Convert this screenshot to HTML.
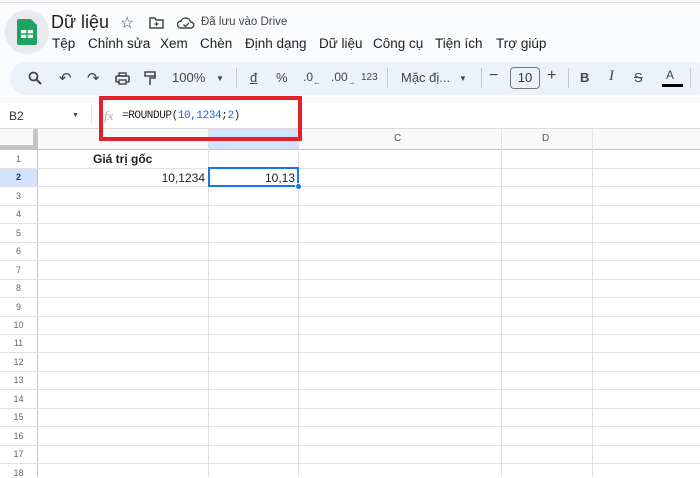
<!DOCTYPE html>
<html><head><meta charset="utf-8"><style>
*{margin:0;padding:0;box-sizing:border-box}
body{width:700px;height:477px;overflow:hidden;background:#fff;font-family:"Liberation Sans",Arial,sans-serif;position:relative;color:#1f1f1f}
.a{position:absolute}
.top{left:0;top:0;width:700px;height:130px;background:#f9fbfd}
.menu{top:36px;font-size:13.5px;color:#1f1f1f}
.tb{left:10px;top:62px;width:700px;height:33px;background:#edf2fa;border-radius:17px}
.ti{top:70px;font-size:13px;color:#444}
.hl{background:#e1e1e1}
.rl{left:0;width:37px;text-align:center;font-size:9px;color:#666}
</style></head><body>
<div class="a top"></div>
<div class="a" style="left:0;top:2px;width:700px;height:1px;background:#e0e0e0"></div>
<div class="a" style="left:5px;top:10px;width:44px;height:44px;border-radius:22px;background:#e8eaed"></div>
<svg class="a" style="left:17px;top:19px" width="20" height="26" viewBox="0 0 20 26"><path d="M0 2a2 2 0 0 1 2-2h12l6 6v18a2 2 0 0 1-2 2H2a2 2 0 0 1-2-2z" fill="#1ea362"/><rect x="4" y="11" width="12" height="8" fill="#fff"/><path d="M4 15h12M10 11v8" stroke="#1ea362" stroke-width="1.5"/></svg>
<div class="a" style="left:51px;top:12px;font-size:18px">Dữ liệu</div>
<div class="a" style="left:120px;top:13px;font-size:16px;color:#444">☆</div>
<svg class="a" style="left:149px;top:17px" width="15" height="12" viewBox="0 0 15 12"><path d="M1 1h5l1 2h7v8H1z" fill="none" stroke="#444" stroke-width="1.5"/><path d="M7.5 5v4M5.5 7h4" stroke="#444" stroke-width="1.3"/></svg>
<svg class="a" style="left:177px;top:17px" width="18" height="12" viewBox="0 0 18 12"><path d="M4 11a3.5 3.5 0 0 1 0-7 5 5 0 0 1 9.5 1A3 3 0 0 1 14 11z" fill="none" stroke="#444" stroke-width="1.4"/><path d="M6.5 7.5l2 2 3.5-3.5" stroke="#444" stroke-width="1.3" fill="none"/></svg>
<div class="a" style="left:201px;top:16px;font-size:11.5px;color:#444">Đã lưu vào Drive</div>
<div class="a menu" style="left:52px">Tệp</div>
<div class="a menu" style="left:88px">Chỉnh sửa</div>
<div class="a menu" style="left:160px">Xem</div>
<div class="a menu" style="left:200px">Chèn</div>
<div class="a menu" style="left:245px">Định dạng</div>
<div class="a menu" style="left:319px">Dữ liệu</div>
<div class="a menu" style="left:373px">Công cụ</div>
<div class="a menu" style="left:435px">Tiện ích</div>
<div class="a menu" style="left:496px">Trợ giúp</div>
<div class="a tb"></div>
<svg class="a" style="left:28px;top:71px" width="14" height="14" viewBox="0 0 14 14"><circle cx="5.5" cy="5.5" r="4" fill="none" stroke="#444" stroke-width="1.8"/><path d="M8.5 8.5l4.5 4.5" stroke="#444" stroke-width="2"/></svg>
<div class="a ti" style="left:59px;font-size:15px;top:69px">↶</div>
<div class="a ti" style="left:87px;font-size:15px;top:69px">↷</div>
<svg class="a" style="left:115px;top:72px" width="15" height="13" viewBox="0 0 15 13"><rect x="1" y="4" width="13" height="6" rx="1" fill="none" stroke="#444" stroke-width="1.6"/><rect x="4" y="1" width="7" height="3" fill="none" stroke="#444" stroke-width="1.4"/><rect x="4" y="8" width="7" height="4" fill="#edf2fa" stroke="#444" stroke-width="1.4"/></svg>
<svg class="a" style="left:144px;top:71px" width="12" height="15" viewBox="0 0 12 15"><rect x="1" y="1" width="10" height="4" fill="none" stroke="#444" stroke-width="1.5"/><path d="M11 3v4H6v7" fill="none" stroke="#444" stroke-width="1.5"/></svg>
<div class="a ti" style="left:172px">100%</div>
<div class="a ti" style="left:216px;font-size:8px;top:74px">▼</div>
<div class="a" style="left:236px;top:68px;width:1px;height:20px;background:#c7c7c7"></div>
<div class="a ti" style="left:250px;text-decoration:underline">đ</div>
<div class="a ti" style="left:276px">%</div>
<div class="a ti" style="left:303px;font-size:12px">.0<sub style="font-size:8px">←</sub></div>
<div class="a ti" style="left:331px;font-size:12px">.00<sub style="font-size:8px">→</sub></div>
<div class="a ti" style="left:361px;font-size:10px;top:72px">123</div>
<div class="a" style="left:387px;top:68px;width:1px;height:20px;background:#c7c7c7"></div>
<div class="a ti" style="left:401px">Mặc đị...</div>
<div class="a ti" style="left:459px;font-size:8px;top:74px">▼</div>
<div class="a" style="left:481px;top:68px;width:1px;height:20px;background:#c7c7c7"></div>
<div class="a ti" style="left:489px;font-size:16px;top:67px">−</div>
<div class="a" style="left:510px;top:67px;width:30px;height:22px;border:1px solid #777;border-radius:4px;font-size:13px;text-align:center;line-height:20px;color:#333">10</div>
<div class="a ti" style="left:547px;font-size:16px;top:67px">+</div>
<div class="a" style="left:568px;top:68px;width:1px;height:20px;background:#c7c7c7"></div>
<div class="a ti" style="left:580px;font-weight:bold">B</div>
<div class="a ti" style="left:609px;font-style:italic;font-family:'Liberation Serif',serif;font-size:15px;top:68px">I</div>
<div class="a ti" style="left:634px;text-decoration:line-through">S</div>
<div class="a ti" style="left:666px;font-size:12px;top:68px">A</div>
<div class="a" style="left:662px;top:84px;width:21px;height:3px;background:#000"></div>
<div class="a" style="left:690px;top:68px;width:1px;height:20px;background:#c7c7c7"></div>
<!-- formula bar -->
<div class="a" style="left:0;top:96px;width:700px;height:1px;background:#fff"></div>
<div class="a" style="left:0;top:103px;width:700px;height:25px;background:#fff"></div>
<div class="a" style="left:9px;top:109px;font-size:12px;color:#333">B2</div>
<div class="a" style="left:72px;top:112px;font-size:7px;color:#444">▼</div>
<div class="a" style="left:91px;top:106px;width:1px;height:18px;background:#ddd"></div>
<div class="a" style="left:104px;top:108px;font-size:13px;color:#aaa;font-style:italic;font-family:'Liberation Serif',serif">fx</div>
<div class="a" style="left:122px;top:110px;font-size:11px;font-family:'Liberation Mono',monospace;color:#222;letter-spacing:-0.4px">=ROUNDUP(<span style="color:#1a64d8">10,1234</span>;<span style="color:#1a64d8">2</span>)</div>
<div class="a" style="left:0;top:128px;width:700px;height:1px;background:#dcdcdc"></div>
<!-- headers -->
<div class="a" style="left:0;top:129px;width:37px;height:20px;background:#f8f9fa;border-right:4px solid #c4c4c4;border-bottom:4px solid #c4c4c4"></div>
<div class="a" style="left:37px;top:129px;width:663px;height:20px;background:#f8f9fa"></div>
<div class="a" style="left:208px;top:129px;width:90px;height:20px;background:#d3e3fd"></div>
<div class="a" style="left:0;top:149px;width:700px;height:1px;background:#c4c4c4"></div>
<div class="a" style="left:394px;top:133px;font-size:10px;color:#555">C</div>
<div class="a" style="left:542px;top:133px;font-size:10px;color:#555">D</div>
<div class="a" style="left:0;top:168px;width:37px;height:18px;background:#d3e3fd"></div>
<!-- vertical lines -->
<div class="a" style="left:37px;top:129px;width:1px;height:348px;background:#c4c4c4"></div>
<div class="a" style="left:208px;top:129px;width:1px;height:348px;background:#e1e1e1"></div>
<div class="a" style="left:298px;top:129px;width:1px;height:348px;background:#e1e1e1"></div>
<div class="a" style="left:501px;top:129px;width:1px;height:348px;background:#e1e1e1"></div>
<div class="a" style="left:592px;top:129px;width:1px;height:348px;background:#e1e1e1"></div>
<!-- horizontal lines -->
<div class="a hl" style="left:0;top:168px;width:700px;height:1px"></div>
<div class="a hl" style="left:0;top:186px;width:700px;height:1px"></div>
<div class="a hl" style="left:0;top:205px;width:700px;height:1px"></div>
<div class="a hl" style="left:0;top:223px;width:700px;height:1px"></div>
<div class="a hl" style="left:0;top:242px;width:700px;height:1px"></div>
<div class="a hl" style="left:0;top:260px;width:700px;height:1px"></div>
<div class="a hl" style="left:0;top:279px;width:700px;height:1px"></div>
<div class="a hl" style="left:0;top:297px;width:700px;height:1px"></div>
<div class="a hl" style="left:0;top:316px;width:700px;height:1px"></div>
<div class="a hl" style="left:0;top:334px;width:700px;height:1px"></div>
<div class="a hl" style="left:0;top:352px;width:700px;height:1px"></div>
<div class="a hl" style="left:0;top:371px;width:700px;height:1px"></div>
<div class="a hl" style="left:0;top:389px;width:700px;height:1px"></div>
<div class="a hl" style="left:0;top:408px;width:700px;height:1px"></div>
<div class="a hl" style="left:0;top:426px;width:700px;height:1px"></div>
<div class="a hl" style="left:0;top:445px;width:700px;height:1px"></div>
<div class="a hl" style="left:0;top:463px;width:700px;height:1px"></div>
<!-- row labels -->
<div class="a rl" style="top:154px">1</div>
<div class="a rl" style="top:172px;font-weight:bold;color:#0b3a8a">2</div>
<div class="a rl" style="top:191px">3</div>
<div class="a rl" style="top:209px">4</div>
<div class="a rl" style="top:228px">5</div>
<div class="a rl" style="top:246px">6</div>
<div class="a rl" style="top:265px">7</div>
<div class="a rl" style="top:283px">8</div>
<div class="a rl" style="top:302px">9</div>
<div class="a rl" style="top:320px">10</div>
<div class="a rl" style="top:338px">11</div>
<div class="a rl" style="top:357px">12</div>
<div class="a rl" style="top:375px">13</div>
<div class="a rl" style="top:394px">14</div>
<div class="a rl" style="top:412px">15</div>
<div class="a rl" style="top:431px">16</div>
<div class="a rl" style="top:449px">17</div>
<div class="a rl" style="top:468px">18</div>
<!-- cells -->
<div class="a" style="left:93px;top:152px;font-size:12px;font-weight:bold">Giá trị gốc</div>
<div class="a" style="left:120px;top:171px;width:85px;text-align:right;font-size:12px">10,1234</div>
<div class="a" style="left:208px;top:167px;width:91px;height:20px;border:2px solid #1a73e8"></div>
<div class="a" style="left:210px;top:171px;width:85px;text-align:right;font-size:12px">10,13</div>
<div class="a" style="left:295px;top:183px;width:7px;height:7px;border-radius:4px;background:#1a73e8;border:1px solid #fff"></div>
<!-- red box -->
<div class="a" style="left:99px;top:96px;width:203px;height:45px;border:4px solid #e3212b"></div>
</body></html>
